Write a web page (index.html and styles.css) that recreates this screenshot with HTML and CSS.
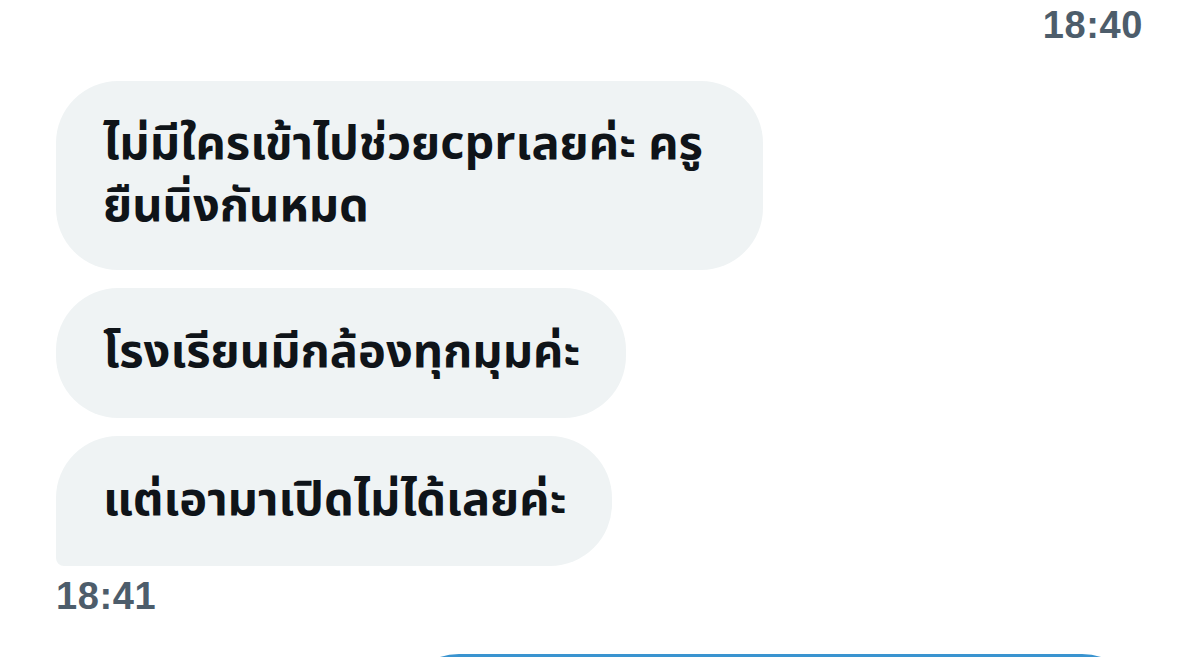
FILE: index.html
```html
<!DOCTYPE html>
<html lang="th">
<head>
<meta charset="utf-8">
<link rel="stylesheet" href="styles.css">
</head>
<body>
<div class="chat">
  <div class="time time-right">18:40</div>
  <div class="group">
    <div class="bubble first">ไม่มีใครเข้าไปช่วยcprเลยค่ะ ครู<br>ยืนนิ่งกันหมด</div>
    <div class="bubble">โรงเรียนมีกล้องทุกมุมค่ะ</div>
    <div class="bubble last">แต่เอามาเปิดไม่ได้เลยค่ะ</div>
  </div>
  <div class="time time-left">18:41</div>
  <div class="sent"></div>
</div>
</body>
</html>
```
FILE: styles.css
```css
html, body {
  margin: 0;
  padding: 0;
  background: #ffffff;
}
body {
  width: 1200px;
  height: 657px;
  overflow: hidden;
}
.chat {
  display: flex;
  flex-direction: column;
  padding-top: 6px;
}
.time {
  font-family: "Liberation Sans", Arial, sans-serif;
  font-weight: 700;
  font-size: 38px;
  line-height: 38px;
  letter-spacing: 0.6px;
  color: #4d5d6b;
}
.time-right {
  align-self: flex-end;
  margin-right: 57px;
}
.time-left {
  margin-left: 56px;
  margin-top: 11px;
}
.group {
  display: flex;
  flex-direction: column;
  align-items: flex-start;
  gap: 18px;
  margin-top: 37px;
  margin-left: 56px;
}
.bubble {
  background: #eff3f4;
  border-radius: 62px;
  padding: 34px 46px 34px 47px;
  font-family: "Noto Sans Thai", Loma, Garuda, "Liberation Sans", sans-serif;
  font-weight: 700;
  font-size: 47px;
  line-height: 62px;
  color: #0f1419;
}
.bubble.first {
  padding-top: 33px;
  padding-bottom: 32px;
  padding-right: 60px;
}
.bubble.last {
  border-bottom-left-radius: 8px;
}
.sent {
  flex-shrink: 0;
  align-self: flex-end;
  margin-top: 39px;
  margin-right: 56px;
  width: 747px;
  height: 130px;
  border-radius: 62px;
  background: #3a94d0;
}
```
